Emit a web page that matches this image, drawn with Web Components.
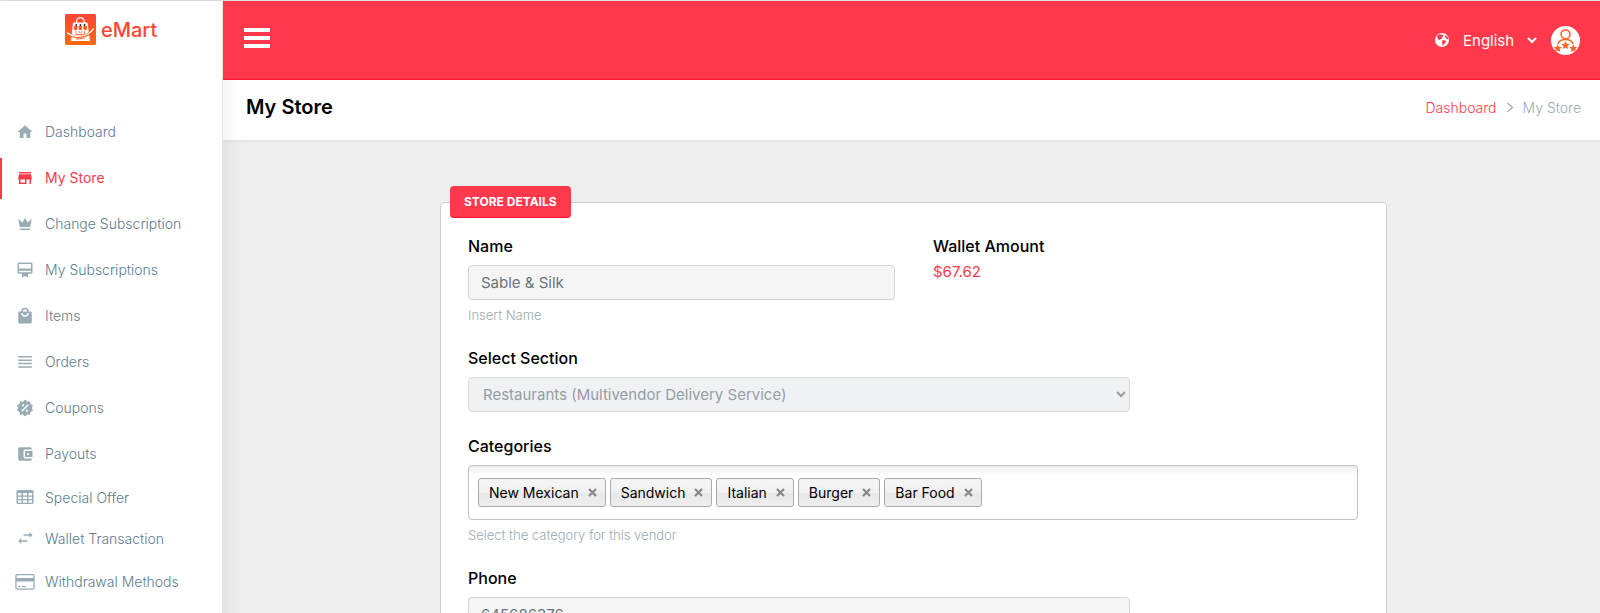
<!DOCTYPE html>
<html lang="en">
<head>
<meta charset="utf-8">
<title>My Store - eMart</title>
<meta name="viewport" content="width=device-width, initial-scale=1">
<style>
:root {
  --brand: #ff394b;
  --brand-edge: #ff1233;
  --muted: #99abb4;
  --nav: #607d8b;
}
body { margin: 0; font-family: Inter, "Open Sans", sans-serif; font-size: 15px; color: #000; background: #eee; }
</style>
</head>
<body>
<app-shell>
  <side-nav slot="nav">
    <nav-item icon="home">Dashboard</nav-item>
    <nav-item icon="store" active>My Store</nav-item>
    <nav-item icon="crown">Change Subscription</nav-item>
    <nav-item icon="membership">My Subscriptions</nav-item>
    <nav-item icon="bag">Items</nav-item>
    <nav-item icon="lines">Orders</nav-item>
    <nav-item icon="sale">Coupons</nav-item>
    <nav-item icon="wallet">Payouts</nav-item>
    <nav-item icon="table" compact>Special Offer</nav-item>
    <nav-item icon="swap" compact>Wallet Transaction</nav-item>
    <nav-item icon="card">Withdrawal Methods</nav-item>
  </side-nav>
  <top-bar slot="header"></top-bar>
  <page-heading slot="heading" parent="Dashboard">My Store</page-heading>
  <form-section heading="STORE DETAILS">
    <field-row>
      <text-field label="Name" value="Sable &amp; Silk" hint="Insert Name"></text-field>
      <wallet-amount label="Wallet Amount">$67.62</wallet-amount>
    </field-row>
    <select-field class="medium" label="Select Section" value="Restaurants (Multivendor Delivery Service)"></select-field>
    <tag-field label="Categories" hint="Select the category for this vendor">
      <tag-chip>New Mexican</tag-chip>
      <tag-chip>Sandwich</tag-chip>
      <tag-chip>Italian</tag-chip>
      <tag-chip>Burger</tag-chip>
      <tag-chip>Bar Food</tag-chip>
    </tag-field>
    <text-field class="medium" label="Phone" value="645686376"></text-field>
  </form-section>
</app-shell>

<script>
const define = (name, html, setup) => {
  const template = document.createElement('template');
  template.innerHTML = html;
  customElements.define(name, class extends HTMLElement {
    constructor() {
      super();
      this.attachShadow({ mode: 'open' }).append(template.content.cloneNode(true));
    }
    connectedCallback() {
      if (setup && !this.ready) setup(this, this.shadowRoot);
      this.ready = true;
    }
  });
};

const icons = {
  home: [18, '0 0 24 24', '<path d="M10 20V14H14V20H19V12H22L12 3L2 12H5V20H10Z"/>'],
  store: [18, '0 0 24 24', '<path d="M12 18H6V14H12M21 14V12L20 7H4L3 12V14H4V20H14V14H18V20H20V14M20 4H4V6H20V4Z"/>'],
  crown: [18, '0 0 24 24', '<path d="M5 16L3 5L8.5 10L12 4L15.5 10L21 5L19 16H5M19 19A1 1 0 0 1 18 20H6A1 1 0 0 1 5 19V18H19V19Z"/>'],
  membership: [18, '0 0 24 24', '<path d="M20 10H4V4H20M20 15H4V13H20M20 2H4C2.89 2 2 2.89 2 4V15C2 16.11 2.89 17 4 17H8V22L12 20L16 22V17H20C21.11 17 22 16.11 22 15V4C22 2.89 21.11 2 20 2Z"/>'],
  bag: [18, '0 0 24 24', '<path d="M12 13A5 5 0 0 1 7 8H9A3 3 0 0 0 15 8H17A5 5 0 0 1 12 13M12 3A3 3 0 0 1 15 6H9A3 3 0 0 1 12 3M19 6H17A5 5 0 0 0 7 6H5C3.89 6 3 6.89 3 8V20A2 2 0 0 0 5 22H19A2 2 0 0 0 21 20V8C21 6.89 20.1 6 19 6Z"/>'],
  lines: [18, '0 0 24 24', '<path d="M3 4V6H21V4M3 10.5H21V8.5H3M3 19.5H21V17.5H3M3 15H21V13H3V15Z"/>'],
  sale: [18, '0 0 24 24', '<path d="M18.65 2.85L19.26 6.71L22.77 8.5L21 12L22.78 15.5L19.24 17.29L18.63 21.15L14.74 20.54L11.97 23.3L9.19 20.5L5.33 21.14L4.71 17.25L1.22 15.47L3 11.97L1.23 8.5L4.74 6.69L5.35 2.86L9.22 3.5L12 .69L14.77 3.46L18.65 2.85M9.5 7A1.5 1.5 0 0 0 9.5 10A1.5 1.5 0 0 0 9.5 7M14.5 14A1.5 1.5 0 0 0 14.5 17A1.5 1.5 0 0 0 14.5 14M8.41 17L17 8.41L15.59 7L7 15.59Z"/>'],
  wallet: [18, '0 0 24 24', '<path fill-rule="evenodd" d="M21 18V19A2 2 0 0 1 19 21H5C3.89 21 3 20.1 3 19V5A2 2 0 0 1 5 3H19A2 2 0 0 1 21 5V6H12C10.89 6 10 6.9 10 8V16A2 2 0 0 0 12 18ZM12 16H22V8H12ZM16 13.5A1.5 1.5 0 0 1 16 10.5A1.5 1.5 0 0 1 16 13.5Z"/>'],
  table: [18, '0 0 18 18', '<path fill-rule="evenodd" d="M2 2H16A1.500 1.500 0 0 1 17.500 3.500V14.500A1.500 1.500 0 0 1 16 16H2A1.500 1.500 0 0 1 .5 14.500V3.500A1.500 1.500 0 0 1 2 2ZM2 5V7.500H5.500V5ZM7 5V7.500H11V5ZM12.500 5V7.500H16V5ZM2 8.700V11H5.500V8.700ZM7 8.700V11H11V8.700ZM12.500 8.700V11H16V8.700ZM2 12.200V14.700H5.500V12.200ZM7 12.200V14.700H11V12.200ZM12.500 12.200V14.700H16V12.200Z"/>'],
  swap: [18, '0 0 24 24', '<path d="M22 8L18 4V7H10V9H18V12M7 12L3 16L7 20V17H15V15H7V12Z"/>'],
  card: [20, '0 0 20 20', '<path fill-rule="evenodd" d="M2 2H18A1.700 1.700 0 0 1 19.700 3.700V16A1.700 1.700 0 0 1 18 17.700H2A1.700 1.700 0 0 1 .3 16V3.700A1.700 1.700 0 0 1 2 2ZM1.600 3.300V6H18.400V3.300ZM1.600 9.500V16.400H18.400V9.500ZM3 14H5.500V15.200H3ZM7 14H11V15.200H7Z"/>'],
  globe: [16, '0 0 16 16', '<circle cx="8" cy="8" r="7"/><path fill="#ff394b" d="M3.500 3.500L6 2L7.500 3L9.500 2.500L9 4.500L7.500 5.500L8 7L6.500 7L5.500 8.200L4 7L3 5ZM8.500 8L11.500 8.500L12 10L10 12L9 14L8 11.500ZM11.500 3L14 5.500L14.500 8L12.500 6.500L11 5Z"/>'],
  chevron: [10, '0 0 10 10', '<path fill="none" stroke="currentColor" stroke-width="1.200" d="M2.500 1L7.500 5.500L2.500 10"/>'],
  menu: [28, '0 0 28 28', '<path d="M1 2H27V6H1ZM1 10H27V14H1ZM1 18H27V22H1Z"/>'],
  user: [29, '0 0 28 28', '<circle cx="14" cy="14" r="14" fill="#fff"/><g fill="none" stroke="#ff6a2b" stroke-width="1.600"><circle cx="14" cy="8" r="4.300"/><path d="M6.700 17.500C7.500 14.500 10 13 14 13S20.500 14.500 21.300 17.500"/></g><path fill="#ff6428" d="M14 14.500L15.200 17.200L18 17.400L15.900 19.300L16.600 22.200L14 20.700L11.400 22.200L12.100 19.300L10 17.400L12.800 17.200ZM6.500 17.500L7.600 20.100L10.500 20.400L8.400 22.200L9 25L6.500 23.600L4 25L4.600 22.200L2.700 20.400L5.400 20.100ZM21.500 17.500L22.600 20.100L25.300 20.400L23.400 22.200L24 25L21.500 23.600L19 25L19.600 22.200L17.500 20.400L20.400 20.100Z"/>'],
  logo: [31, '0 0 31 31', '<defs><linearGradient id="g" x2="0" y2="1"><stop stop-color="#ff4438"/><stop offset="1" stop-color="#ff6b0b"/></linearGradient></defs><rect width="31" height="31" rx="1.500" fill="url(#g)"/><path fill="none" stroke="#fff" stroke-width="1.200" d="M11.500 9V7.500A3.700 3.700 0 0 1 19.200 7.500V9"/><path fill="#fff" d="M8 8.500H22.500L25 27H6Z"/><path fill="#333" d="M10.500 10H12V12.500H10.500ZM14.700 10H16.200V12.500H14.700ZM18.800 10H20.300V12.500H18.800Z"/><path fill="#ff5a24" d="M9 12H12.500V14.500A1.700 1.700 0 0 1 9 14.500ZM13.600 12H17.200V14.500A1.700 1.700 0 0 1 13.600 14.500ZM18.400 12H22V14.500A1.700 1.700 0 0 1 18.400 14.500Z"/><path fill="none" stroke="#ff5a24" stroke-width=".8" d="M11 17V20.500H19.500V17M14 17A1.500 2 0 0 0 17 17"/><path fill="none" stroke="#ff5a24" stroke-width="2.600" d="M2.500 19C8 24.500 23 24.500 28.500 14.500"/><path fill="none" stroke="#fff" stroke-width="1.300" d="M2 18.500C8 24 23 24 28.500 14.500"/><path fill="none" stroke="#ff6318" d="M11 25C15 25 18 24.500 20 23.500"/>']
};

define('ui-icon', `<style>
  :host { display: inline-flex; flex: none; }
  svg { display: block; fill: currentColor; }
</style>`, (el, root) => {
  const [size, box, body] = icons[el.getAttribute('name')];
  root.innerHTML += `<svg width="${size}" height="${size}" viewBox="${box}" aria-hidden="true">${body}</svg>`;
});

define('app-shell', `<style>
  :host { display: grid; grid-template-columns: 223px minmax(0, 1fr); grid-template-rows: auto auto 1fr; min-height: 100vh; box-sizing: border-box; border-top: 1px solid #e0e0e0; }
  ::slotted([slot=nav]) { grid-row: 1 / 4; z-index: 1; }
  ::slotted([slot=header]) { grid-column: 2; z-index: 2; }
  ::slotted([slot=heading]) { grid-column: 2; }
  main { grid-column: 2; padding: 46px 213px 30px 217px; }
</style>
<slot name="nav"></slot><slot name="header"></slot><slot name="heading"></slot><main><slot></slot></main>`);

define('side-nav', `<style>
  :host { display: block; background: #fff; box-shadow: 1px 0 20px rgba(0,0,0,.08); border-right: 1px solid #e6e6e6; }
  .brand { display: flex; align-items: center; gap: 5px; padding: 13px 0 0 65px; height: 31px; color: #ff4632; font-size: 20px; font-weight: 500; text-decoration: none; }
  nav { display: flex; flex-direction: column; gap: 5px; padding-top: 67px; }
</style>
<a class="brand" href="#"><ui-icon name="logo"></ui-icon><span>eMart</span></a>
<nav><slot></slot></nav>`);

define('nav-item', `<style>
  :host { display: block; color: var(--nav); --icon: var(--muted); }
  a { display: flex; align-items: center; box-sizing: border-box; height: 41px; border-left: 2px solid transparent; padding: 0 0 2px 13px; color: inherit; font-size: 14px; font-weight: 300; text-decoration: none; }
  i { display: flex; justify-content: center; width: 20px; margin-right: 10px; color: var(--icon); }
  :host([compact]) a { height: 36px; }
  :host([active]) { color: var(--brand); --icon: var(--brand); }
  :host([active]) a { border-color: var(--brand); font-weight: 400; }
</style>
<a href="#"><i></i><slot></slot></a>`, (el, root) => {
  root.querySelector('i').innerHTML = `<ui-icon name="${el.getAttribute('icon')}"></ui-icon>`;
  if (el.hasAttribute('active')) root.querySelector('a').setAttribute('aria-current', 'page');
});

define('top-bar', `<style>
  :host { display: flex; align-items: center; justify-content: space-between; box-sizing: border-box; height: 79px; padding: 0 20px; background: var(--brand); border-bottom: 1px solid var(--brand-edge); color: #fff; }
  button { border: 0; padding: 0; background: none; color: inherit; font: inherit; display: flex; }
  .tools, label { display: flex; align-items: center; }
  label { gap: 9px; }
  .tools { gap: 11px; }
  select { border: 0; background: transparent; color: #fff; font: inherit; width: 81px; }
</style>
<button aria-label="Menu"><ui-icon name="menu"></ui-icon></button>
<div class="tools">
  <label><ui-icon name="globe"></ui-icon><select aria-label="Language"><option>English</option></select></label>
  <button aria-label="Account"><ui-icon name="user"></ui-icon></button>
</div>`);

define('page-heading', `<style>
  :host { display: flex; align-items: center; justify-content: space-between; box-sizing: border-box; height: 60px; padding: 0 19px 6px 23px; background: #fff; box-shadow: 0 1px 3px rgba(0,0,0,.08); }
  h1 { margin: 0; font-size: 20px; font-weight: 600; line-height: 30px; }
  nav { display: flex; align-items: center; gap: 8px; font-size: 14px; font-weight: 300; color: var(--muted); }
  a { color: var(--brand); text-decoration: none; }
</style>
<h1></h1><nav aria-label="Breadcrumb"><a href="#"></a><ui-icon name="chevron"></ui-icon><span></span></nav>`, (el, root) => {
  root.querySelector('h1').textContent = el.textContent;
  root.querySelector('span').textContent = el.textContent;
  root.querySelector('a').textContent = el.getAttribute('parent');
});

define('form-section', `<style>
  :host { display: block; }
  fieldset { margin: 0; min-width: 0; border: 1px solid #ccc; border-radius: 4px; padding: 16px 28px 28px 27px; background: #fff; }
  legend { box-sizing: border-box; margin-left: -18px; height: 32px; padding: 0 14px; border-radius: 4px; border-bottom: 1px solid var(--brand-edge); background: var(--brand); color: #fff; font-size: 12px; font-weight: 700; line-height: 32px; }
  div { display: flex; flex-direction: column; gap: 22px; }
  ::slotted(.medium) { width: calc(75% - 6px); }
</style>
<fieldset><legend></legend><div><slot></slot></div></fieldset>`, (el, root) => {
  root.querySelector('legend').textContent = el.getAttribute('heading');
});

define('field-row', `<style>
  :host { display: grid; grid-template-columns: calc(50% - 18px) 1fr; gap: 38px; }
</style><slot></slot>`);

const fieldStyle = `
  :host { display: block; }
  label { display: block; margin-bottom: 7px; font-size: 16px; font-weight: 500; line-height: 24px; }
  p { margin: 6px 0 0; font-size: 13px; font-weight: 300; line-height: 18px; color: var(--muted); }
  p:empty { display: none; }
  input, select { display: block; box-sizing: border-box; width: 100%; height: 35px; border: 1px solid #d3d5d6; border-radius: 4px; padding: 0 12px; font: inherit; color: #67757c; background: #f5f5f5; }
`;
const fillField = (el, root) => {
  root.querySelector('label').textContent = el.getAttribute('label');
  const hint = root.querySelector('p');
  if (hint) hint.textContent = el.getAttribute('hint') || '';
};

define('text-field', `<style>${fieldStyle}</style>
<label for="control"></label><input id="control" type="text" readonly><p></p>`, (el, root) => {
  fillField(el, root);
  root.querySelector('input').value = el.getAttribute('value');
});

define('select-field', `<style>${fieldStyle}
  select { padding: 0 0 0 10px; background: #e9ecef; opacity: .7; border-color: #c9cbcc; }
</style>
<label for="control"></label><select id="control" disabled><option></option></select>`, (el, root) => {
  fillField(el, root);
  root.querySelector('option').textContent = el.getAttribute('value');
});

define('wallet-amount', `<style>${fieldStyle}
  label { margin-bottom: 2px; }
  output { display: block; color: var(--brand); font-weight: 400; line-height: 24px; }
</style>
<label for="amount"></label><output id="amount"><slot></slot></output>`, fillField);

define('tag-field', `<style>${fieldStyle}
  .box { display: flex; flex-wrap: wrap; align-items: flex-start; gap: 4px; box-sizing: border-box; min-height: 54px; padding: 12px 9px; border: 1px solid #c2c2c2; border-radius: 4px; background: linear-gradient(#eee, #fff 10px); }
  input { flex: 1; width: 25px; min-width: 25px; height: 28px; padding: 0; border: 0; background: transparent; }
</style>
<label for="control"></label><div class="box"><slot></slot><input id="control" type="text"></div><p></p>`, fillField);

define('tag-chip', `<style>
  :host { display: flex; align-items: center; gap: 9px; box-sizing: border-box; height: 29px; padding: 0 8px 0 10px; border: 1px solid #aaa; border-radius: 3px; background: linear-gradient(#f4f4f4 20%, #f0f0f0 50%, #e8e8e8 52%, #eee); font-size: 14px; line-height: 20px; }
  button { display: flex; border: 0; padding: 0; background: none; color: #888; }
  svg { display: block; }
</style>
<slot></slot><button aria-label="Remove"><svg width="9" height="9" viewBox="0 0 9 9" fill="none" stroke="currentColor" stroke-width="2.200"><path d="M1 1L8 8M8 1L1 8"/></svg></button>`);
</script>
</body>
</html>
